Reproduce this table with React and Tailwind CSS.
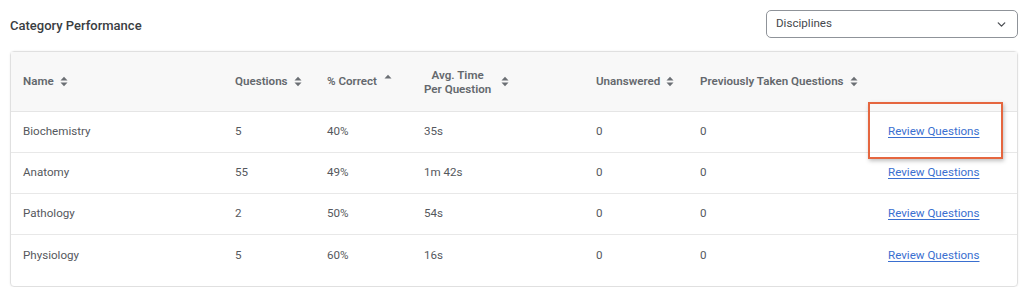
import { ChevronDown } from 'lucide-react'

const ROWS = [
  { name: 'Biochemistry', questions: 5, correct: '40%', time: '35s', unanswered: 0, previous: 0 },
  { name: 'Anatomy', questions: 55, correct: '49%', time: '1m 42s', unanswered: 0, previous: 0 },
  { name: 'Pathology', questions: 2, correct: '50%', time: '54s', unanswered: 0, previous: 0 },
  { name: 'Physiology', questions: 5, correct: '60%', time: '16s', unanswered: 0, previous: 0 },
]

function SortIcon({ up = true, down = true }) {
  return (
    <svg width="8" height="11" viewBox="0 0 8 11" className="shrink-0 text-[#6b6f74]" aria-hidden="true">
      {up && <path d="M0.5 4.5L4 0.8 7.5 4.5z" fill="currentColor" />}
      {down && <path d="M0.5 6.5L4 10.2 7.5 6.5z" fill="currentColor" />}
    </svg>
  )
}

function Head({ children, up, down }) {
  return (
    <th className="whitespace-nowrap px-3 text-left align-middle font-semibold">
      <span className="inline-flex items-center gap-[6px]">
        {children}
        <SortIcon up={up} down={down} />
      </span>
    </th>
  )
}

export default function App() {
  return (
    <div className="w-[1024px] bg-white pl-[10px] pr-[6px] pt-[10px] font-['Roboto',sans-serif] text-[11.6px] text-[#55585d]">
      {/* titel + dropdown */}
      <div className="flex h-[28px] items-center justify-between">
        <h2 className="pt-[3px] text-[13px] font-medium text-[#3a3d42]">Category Performance</h2>
        <button
          type="button"
          className="flex h-[28px] w-[252px] items-center justify-between rounded-[5px] border border-[#8f9399] px-[9px] text-[11.6px] text-[#45484d]"
        >
          Disciplines
          <ChevronDown size={13} strokeWidth={2.4} className="text-[#4a4d52]" />
        </button>
      </div>

      <div className="mt-[13px] rounded-[4px] border border-[#e0e0e0] pb-[11px] shadow-[0_0_2px_rgba(0,0,0,0.08)]">
        <table className="w-full table-fixed border-collapse">
          <colgroup>
            <col className="w-[212px]" />
            <col className="w-[92px]" />
            <col className="w-[97px]" />
            <col className="w-[172px]" />
            <col className="w-[104px]" />
            <col className="w-[188px]" />
            <col />
          </colgroup>
          <thead>
            <tr className="h-[59px] border-b border-[#e5e5e5] bg-[#f8f8f8] text-[#64686d]">
              <Head>Name</Head>
              <Head>Questions</Head>
              <th className="whitespace-nowrap px-3 text-left align-middle font-semibold">
                <span className="inline-flex items-center gap-[7px]">
                  % Correct
                  <svg width="8" height="11" viewBox="0 0 8 11" className="-mt-[4px] text-[#6b6f74]" aria-hidden="true">
                    <path d="M0.5 4.5L4 0.8 7.5 4.5z" fill="currentColor" />
                  </svg>
                </span>
              </th>
              <th className="whitespace-nowrap px-3 text-left align-middle font-semibold">
                <span className="inline-flex items-center gap-[10px]">
                  <span className="text-center leading-[14px]">
                    Avg. Time
                    <br />
                    Per Question
                  </span>
                  <SortIcon />
                </span>
              </th>
              <Head>Unanswered</Head>
              <Head>Previously Taken Questions</Head>
              <th />
            </tr>
          </thead>
          <tbody>
            {ROWS.map((row, i) => (
              <tr key={row.name} className={`h-[41px] ${i < ROWS.length - 1 ? 'border-b border-[#e8e8e8]' : ''}`}>
                <td className="px-3 pt-[1px]">{row.name}</td>
                <td className="px-3 pt-[1px]">{row.questions}</td>
                <td className="px-3 pt-[1px]">{row.correct}</td>
                <td className="px-3 pt-[1px]">{row.time}</td>
                <td className="px-3 pt-[1px]">{row.unanswered}</td>
                <td className="px-3 pt-[1px]">{row.previous}</td>
                <td className="relative px-3 pt-[1px]">
                  <a href="#" className="text-[#3a6fd0] underline underline-offset-2">
                    Review Questions
                  </a>
                  {i === 0 && (
                    <span className="pointer-events-none absolute left-[-8px] top-[-10px] h-[57px] w-[135px] border-2 border-[#e5663f] shadow-[1px_2px_4px_rgba(0,0,0,0.25)]" />
                  )}
                </td>
              </tr>
            ))}
          </tbody>
        </table>
      </div>
    </div>
  )
}
